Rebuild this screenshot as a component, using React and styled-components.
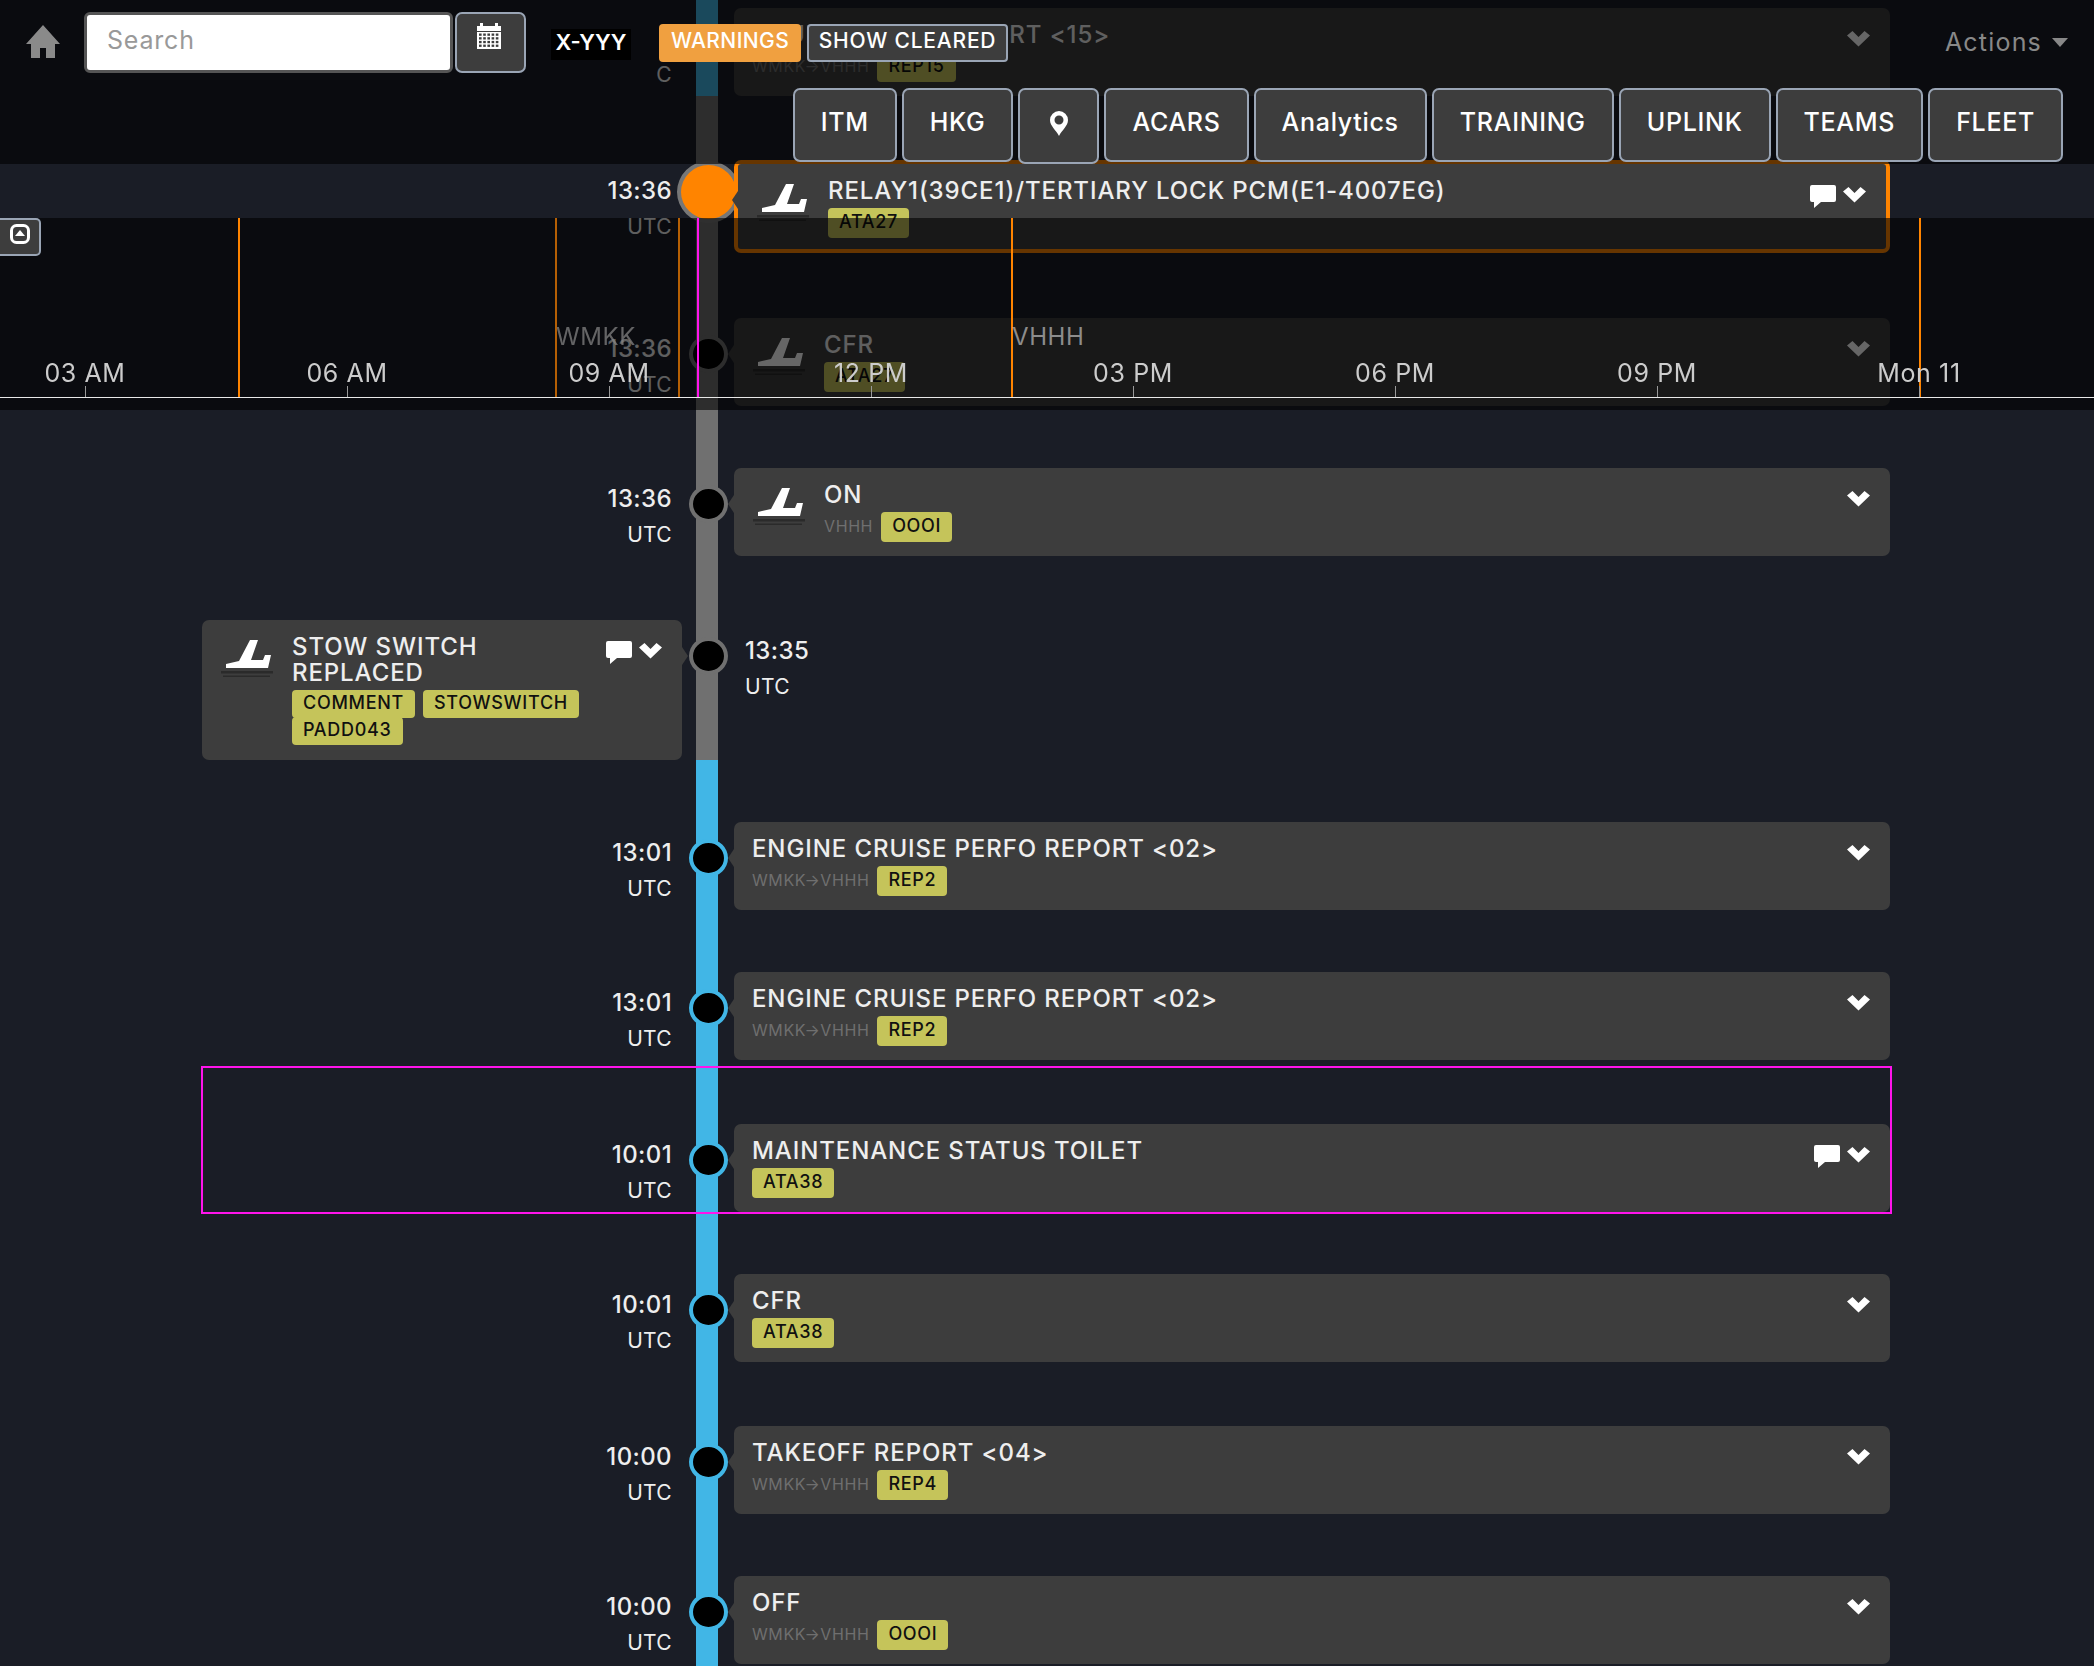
import React from "react";
import styled, { createGlobalStyle } from "styled-components";

const GlobalStyle = createGlobalStyle`
  html, body {
    margin: 0;
    padding: 0;
    background: #1a1d26;
    font-family: "Inter", "Liberation Sans", sans-serif;
  }
`;

const BLUE = "#41b6e6";
const GREY = "#707070";

const rows = [
  { gap: -54, rail: BLUE, zone: "C", title: "CRUISE PERFO REPORT <15>", route: "WMKK→VHHH", tags: ["REP15"] },
  { gap: 64, rail: GREY, time: "13:36", zone: "UTC", title: "RELAY1(39CE1)/TERTIARY LOCK PCM(E1-4007EG)", tags: ["ATA27"], plane: true, comment: true, active: true },
  { gap: 65, rail: GREY, time: "13:36", zone: "UTC", title: "CFR", tags: ["ATA27"], plane: true },
  { gap: 62, rail: GREY, time: "13:36", zone: "UTC", title: "ON", route: "VHHH", tags: ["OOOI"], plane: true },
  { gap: 64, rail: GREY, time: "13:35", zone: "UTC", title: "STOW SWITCH REPLACED", tags: ["COMMENT", "STOWSWITCH", "PADD043"], plane: true, comment: true, left: true },
  { gap: 62, rail: BLUE, time: "13:01", zone: "UTC", title: "ENGINE CRUISE PERFO REPORT <02>", route: "WMKK→VHHH", tags: ["REP2"] },
  { gap: 62, rail: BLUE, time: "13:01", zone: "UTC", title: "ENGINE CRUISE PERFO REPORT <02>", route: "WMKK→VHHH", tags: ["REP2"] },
  { gap: 64, rail: BLUE, time: "10:01", zone: "UTC", title: "MAINTENANCE STATUS TOILET", tags: ["ATA38"], comment: true },
  { gap: 62, rail: BLUE, time: "10:01", zone: "UTC", title: "CFR", tags: ["ATA38"] },
  { gap: 64, rail: BLUE, time: "10:00", zone: "UTC", title: "TAKEOFF REPORT <04>", route: "WMKK→VHHH", tags: ["REP4"] },
  { gap: 62, rail: BLUE, time: "10:00", zone: "UTC", title: "OFF", route: "WMKK→VHHH", tags: ["OOOI"] },
];

const navButtons = ["ITM", "HKG", "pin", "ACARS", "Analytics", "TRAINING", "UPLINK", "TEAMS", "FLEET"];
const ticks = ["03 AM", "06 AM", "09 AM", "12 PM", "03 PM", "06 PM", "09 PM", "Mon 11"];
const markers = [
  { x: 238 },
  { x: 555, label: "WMKK", dim: true },
  { x: 678, dim: true },
  { x: 1011, label: "VHHH" },
  { x: 1919 },
];

const PlaneIcon = () => (
  <PlaneSvg viewBox="0 0 70 60">
    <path fill="#fff" d="M37 13h8l-7 20h12l2-5h6l-3 13H13v-4l13-3z" />
    <rect x="8" y="44" width="52" height="2.5" fill="#2a2a2a" />
    <rect x="10" y="48.5" width="47" height="1.5" fill="#2a2a2a" />
  </PlaneSvg>
);

const Chevron = () => (
  <ChevronSvg viewBox="0 0 23 16">
    <path fill="#fff" d="M0 4.500L5.500 0l6 6 6-6L23 4.500 11.500 15.500z" />
  </ChevronSvg>
);

const CommentIcon = () => (
  <svg width="26" height="23" viewBox="0 0 26 23">
    <path fill="#fff" d="M2 0h22a2 2 0 0 1 2 2v13a2 2 0 0 1-2 2H11l-7 6v-6H2a2 2 0 0 1-2-2V2a2 2 0 0 1 2-2z" />
  </svg>
);

const HomeIcon = () => (
  <HomeSvg viewBox="0 0 34 33">
    <path fill="#8a8a8a" d="M17 0l17 19h-5v14h-9V23h-6v10H5V19H0z" />
  </HomeSvg>
);

const CalendarIcon = () => {
  const holes = [];
  for (let r = 0; r < 4; r++) {
    for (let c = 0; c < 5; c++) {
      holes.push(<rect key={`${r}-${c}`} x={2 + c * 4.2} y={10.5 + r * 3.7} width="2.6" height="2.3" fill="#3d3d3d" />);
    }
  }
  return (
    <svg width="24" height="26" viewBox="0 0 24 26">
      <path fill="#fff" d="M3 0h3v3h12V0h3v3h3v5H0V3h3z" />
      <rect y="9" width="24" height="17" fill="#fff" />
      {holes}
    </svg>
  );
};

const PinIcon = () => (
  <svg width="18" height="25" viewBox="0 0 18 25">
    <path
      fill="#fff"
      fillRule="evenodd"
      d="M9 0a9 9 0 0 1 9 9c0 6-6 10-9 16C6 19 0 15 0 9a9 9 0 0 1 9-9zm0 4.500a4.500 4.500 0 1 0 0 9 4.500 4.500 0 0 0 0-9z"
    />
  </svg>
);

const ExpandIcon = () => (
  <svg width="20" height="20" viewBox="0 0 20 20">
    <rect x="1.5" y="1.5" width="17" height="17" rx="5" fill="none" stroke="#fff" strokeWidth="3" />
    <path fill="#fff" d="M10 6l5 6H5z" />
  </svg>
);

const EventCard = ({ row }) => (
  <Card $left={row.left} $active={row.active}>
    {row.plane && <PlaneIcon />}
    <CardBody $plane={row.plane}>
      <Title $narrow={row.left}>{row.title}</Title>
      <Meta>
        {row.route && <Route>{row.route}</Route>}
        {row.tags.map((t) => (
          <Tag key={t} $small={row.left}>
            {t}
          </Tag>
        ))}
      </Meta>
    </CardBody>
    <CardActions>
      {row.comment && <CommentIcon />}
      <Chevron />
    </CardActions>
  </Card>
);

const TimeLabel = ({ row, $left }) => (
  <TimeBox $left={$left}>
    <Clock>{row.time || "\u00a0"}</Clock>
    <Zone>{row.zone}</Zone>
  </TimeBox>
);

const App = () => {
  return (
    <Page>
      <GlobalStyle />
      <Timeline>
        {rows.map((row, i) => (
          <Row key={i} $gap={row.gap} $rail={row.rail}>
            <LeftCell>{row.left ? <EventCard row={row} /> : <TimeLabel row={row} />}</LeftCell>
            <DotCell>
              <Dot $rail={row.rail} $active={row.active} />
            </DotCell>
            <RightCell>{row.left ? <TimeLabel row={row} $left /> : <EventCard row={row} />}</RightCell>
          </Row>
        ))}
      </Timeline>

      <Highlight />

      <Header>
        <ShadeTop>
          <TopBar>
            <HomeIcon />
            <SearchBox placeholder="Search" />
            <CalendarButton>
              <CalendarIcon />
            </CalendarButton>
            <Tail>X-YYY</Tail>
            <Warnings>WARNINGS</Warnings>
            <ShowCleared>SHOW CLEARED</ShowCleared>
            <Actions>
              Actions <Caret />
            </Actions>
          </TopBar>
          <NavBar>
            {navButtons.map((b) => (
              <NavButton key={b} $pin={b === "pin"}>
                {b === "pin" ? <PinIcon /> : b}
              </NavButton>
            ))}
          </NavBar>
        </ShadeTop>
        <Band />
        <ShadeBottom>
          <ExpandButton>
            <ExpandIcon />
          </ExpandButton>
          <Axis>
            {markers.map((m) => (
              <Marker key={m.x} $x={m.x} $dim={m.dim}>
                {m.label && <MarkerLabel>{m.label}</MarkerLabel>}
              </Marker>
            ))}
            <NowLine />
            <Ticks>
              {ticks.map((t) => (
                <TickCell key={t}>
                  <TickLabel>{t}</TickLabel>
                  <TickMark />
                </TickCell>
              ))}
            </Ticks>
          </Axis>
        </ShadeBottom>
      </Header>
    </Page>
  );
};

export default App;

const Page = styled.div`
  position: relative;
  width: 2094px;
  height: 1666px;
  overflow: hidden;
  background: #1a1d26;
`;
const Timeline = styled.div`
  display: flex;
  flex-direction: column;
`;
const Row = styled.div`
  position: relative;
  display: grid;
  grid-template-columns: 689px 39px 1162px;
  margin-top: ${({ $gap }) => ($gap < 0 ? `${$gap}px` : "0")};
  padding-top: ${({ $gap }) => ($gap < 0 ? "62px" : `${$gap}px`)};
  &:last-child {
    padding-bottom: 4px;
  }
  &::before {
    content: "";
    position: absolute;
    left: 696px;
    width: 22px;
    top: 0;
    bottom: 0;
    background: ${({ $rail }) => $rail};
  }
`;
const LeftCell = styled.div`
  position: relative;
  display: flex;
  justify-content: flex-end;
`;
const DotCell = styled.div`
  position: relative;
  display: flex;
  justify-content: center;
  align-items: flex-start;
`;
const RightCell = styled.div`
  position: relative;
  padding-left: 6px;
`;
const Dot = styled.div`
  flex-shrink: 0;
  box-sizing: border-box;
  width: ${({ $active }) => ($active ? "63px" : "39px")};
  height: ${({ $active }) => ($active ? "62px" : "38px")};
  margin-top: ${({ $active }) => ($active ? "1px" : "17px")};
  border-radius: 50%;
  background: ${({ $active }) => ($active ? "#ff8400" : "#000")};
  border: 4px solid ${({ $rail, $active }) => ($active ? "#777" : $rail)};
`;
const Card = styled.div`
  position: relative;
  box-sizing: border-box;
  display: flex;
  align-items: flex-start;
  width: ${({ $left }) => ($left ? "480px" : "1156px")};
  height: ${({ $left, $active }) => ($left ? "140px" : $active ? "93px" : "88px")};
  margin-right: ${({ $left }) => ($left ? "7px" : "0")};
  background: #3d3d3d;
  border-radius: 7px;
  border: ${({ $active }) => ($active ? "4px solid #ff8400" : "none")};
  &::after {
    content: "";
    position: absolute;
    top: 27px;
    ${({ $left }) => ($left ? "right: -6px;" : "left: -6px;")}
    border-top: 9px solid transparent;
    border-bottom: 9px solid transparent;
    ${({ $left }) => ($left ? "border-left: 6px solid #3d3d3d;" : "border-right: 6px solid #3d3d3d;")}
  }
`;
const PlaneSvg = styled.svg`
  flex-shrink: 0;
  width: 70px;
  height: 60px;
  margin: 7px 9px 0 11px;
`;
const CardBody = styled.div`
  flex: 1;
  min-width: 0;
  padding: 14px 0 0 ${({ $plane }) => ($plane ? "0" : "18px")};
`;
const Title = styled.div`
  font-size: 24px;
  line-height: 26px;
  font-weight: 500;
  letter-spacing: 0.9px;
  color: #eeeeee;
  max-width: ${({ $narrow }) => ($narrow ? "260px" : "none")};
`;
const Meta = styled.div`
  display: flex;
  flex-wrap: wrap;
  align-items: center;
  column-gap: 8px;
  margin-top: 4px;
`;
const Route = styled.span`
  padding-bottom: 3px;
  font-size: 16px;
  letter-spacing: 0.6px;
  color: #6f6f6f;
`;
const Tag = styled.span`
  box-sizing: border-box;
  display: inline-flex;
  align-items: center;
  height: ${({ $small }) => ($small ? "28px" : "30px")};
  margin-bottom: ${({ $small }) => ($small ? "-1px" : "0")};
  padding: 0 11px 3px;
  border-radius: 4px;
  background: #c5c45a;
  color: #111;
  font-size: 18px;
  font-weight: 500;
  letter-spacing: 0.7px;
`;
const CardActions = styled.div`
  flex-shrink: 0;
  display: flex;
  align-items: flex-start;
  gap: 7px;
  padding: 21px 20px 0 0;
`;
const ChevronSvg = styled.svg`
  width: 23px;
  height: 16px;
  margin-top: 2px;
`;
const TimeBox = styled.div`
  padding: 13px ${({ $left }) => ($left ? "0" : "17px")} 0 ${({ $left }) => ($left ? "11px" : "0")};
  text-align: ${({ $left }) => ($left ? "left" : "right")};
`;
const Clock = styled.div`
  font-size: 24px;
  line-height: 36px;
  font-weight: 500;
  letter-spacing: 0.4px;
  color: #eeeeee;
`;
const Zone = styled.div`
  font-size: 21px;
  line-height: 36px;
  letter-spacing: 0.3px;
  color: #eeeeee;
`;
const Highlight = styled.div`
  position: absolute;
  left: 201px;
  top: 1066px;
  box-sizing: border-box;
  width: 1691px;
  height: 148px;
  border: 2px solid #ff14ec;
`;
const Header = styled.div`
  position: absolute;
  top: 0;
  left: 0;
  right: 0;
  display: flex;
  flex-direction: column;
`;
const ShadeTop = styled.div`
  box-sizing: border-box;
  height: 164px;
  padding-top: 12px;
  background: rgba(0, 0, 0, 0.6);
`;
const Band = styled.div`
  height: 54px;
`;
const ShadeBottom = styled.div`
  position: relative;
  height: 192px;
  background: rgba(0, 0, 0, 0.6);
`;
const TopBar = styled.div`
  display: flex;
  align-items: flex-start;
  height: 61px;
`;
const HomeSvg = styled.svg`
  flex-shrink: 0;
  width: 34px;
  height: 33px;
  margin: 13px 24px 0 26px;
`;
const SearchBox = styled.input`
  box-sizing: border-box;
  width: 369px;
  height: 61px;
  padding: 0 20px 5px;
  border: 3px solid #555;
  border-radius: 6px;
  background: #fff;
  outline: none;
  font-family: inherit;
  font-size: 25px;
  letter-spacing: 0.8px;
  &::placeholder {
    color: #999;
  }
`;
const CalendarButton = styled.div`
  box-sizing: border-box;
  display: flex;
  justify-content: center;
  padding: 9px 4px 0 0;
  width: 71px;
  height: 61px;
  margin-left: 2px;
  background: #3d3d3d;
  border: 2px solid #9aa5b5;
  border-radius: 7px;
`;
const Tail = styled.div`
  width: 80px;
  height: 31px;
  margin: 17px 0 0 25px;
  background: #000;
  color: #fff;
  font-size: 22px;
  font-weight: 600;
  line-height: 27px;
  text-align: center;
`;
const Warnings = styled.div`
  box-sizing: border-box;
  display: flex;
  align-items: center;
  justify-content: center;
  width: 142px;
  height: 38px;
  margin: 12px 0 0 28px;
  padding-bottom: 6px;
  background: #f0a040;
  border-radius: 4px;
  color: #fff;
  font-size: 21px;
  font-weight: 500;
  letter-spacing: 0.4px;
`;
const ShowCleared = styled.div`
  box-sizing: border-box;
  display: flex;
  align-items: center;
  justify-content: center;
  width: 201px;
  height: 38px;
  margin: 12px 0 0 6px;
  padding-bottom: 6px;
  background: #3d3d3d;
  border: 2px solid #9aa5b5;
  border-radius: 4px;
  color: #fff;
  font-size: 21px;
  font-weight: 500;
  letter-spacing: 0.8px;
`;
const Actions = styled.div`
  display: flex;
  align-items: center;
  gap: 10px;
  margin: 14px 26px 0 auto;
  height: 32px;
  color: #888;
  font-size: 25px;
  letter-spacing: 1.2px;
`;
const Caret = styled.span`
  border-top: 9px solid #888;
  border-left: 8px solid transparent;
  border-right: 8px solid transparent;
`;
const NavBar = styled.div`
  display: flex;
  justify-content: flex-end;
  gap: 5px;
  margin-top: 15px;
  padding-right: 31px;
`;
const NavButton = styled.div`
  box-sizing: border-box;
  display: flex;
  align-items: center;
  justify-content: center;
  width: ${({ $pin }) => ($pin ? "81px" : "auto")};
  height: ${({ $pin }) => ($pin ? "76px" : "74px")};
  padding: 0 ${({ $pin }) => ($pin ? "0" : "26px")} 6px;
  background: #3d3d3d;
  border: 2px solid #9aa5b5;
  border-radius: 7px;
  color: #fff;
  font-size: 25px;
  font-weight: 500;
  letter-spacing: 0.7px;
`;
const ExpandButton = styled.div`
  box-sizing: border-box;
  display: flex;
  justify-content: center;
  padding-top: 4px;
  width: 41px;
  height: 38px;
  background: #3d3d3d;
  border: 2px solid #9aa5b5;
  border-left: none;
  border-radius: 0 5px 5px 0;
`;
const Axis = styled.div`
  position: absolute;
  left: 0;
  right: 0;
  top: 0;
  height: 179px;
  border-bottom: 1px solid #e8e8e8;
`;
const Marker = styled.div`
  position: absolute;
  top: 0;
  bottom: 0;
  left: ${({ $x }) => $x}px;
  width: 2px;
  background: #ff8400;
  opacity: ${({ $dim }) => ($dim ? 0.7 : 1)};
`;
const MarkerLabel = styled.span`
  position: absolute;
  left: 1px;
  top: 104px;
  color: #8c8c8c;
  font-size: 24px;
  letter-spacing: 0.6px;
`;
const NowLine = styled.div`
  position: absolute;
  left: 697px;
  top: 0;
  bottom: 0;
  width: 2px;
  background: #ff14ec;
`;
const Ticks = styled.div`
  position: absolute;
  left: -46px;
  bottom: 0;
  display: flex;
`;
const TickCell = styled.div`
  width: 262px;
  display: flex;
  flex-direction: column;
  align-items: center;
`;
const TickLabel = styled.div`
  color: #cccccc;
  font-size: 25px;
  line-height: 26px;
  letter-spacing: 0.6px;
`;
const TickMark = styled.div`
  width: 1px;
  height: 11px;
  background: #999;
`;
